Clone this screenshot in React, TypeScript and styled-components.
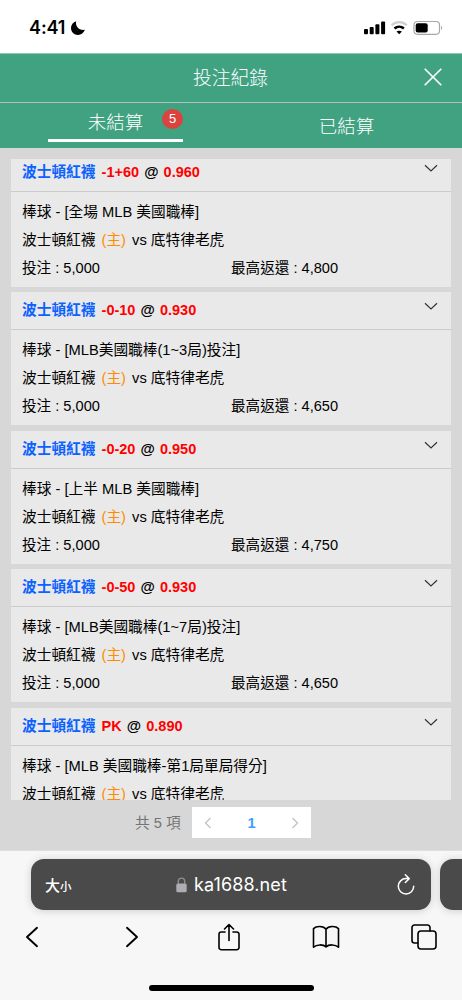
import React from "react";
import styled, { createGlobalStyle } from "styled-components";

const GlobalStyle = createGlobalStyle`
  * { box-sizing: border-box; }
  body {
    margin: 0;
    background: #f7f7f7;
    font-family: "Liberation Sans", "Noto Sans CJK TC", sans-serif;
    color: #000;
  }
`;

const Screen = styled.div`
  width: 462px;
  height: 1000px;
  overflow: hidden;
  display: flex;
  flex-direction: column;
`;

const StatusBar = styled.div`
  height: 53px;
  flex: none;
  background: #fff;
  display: flex;
  align-items: center;
  padding: 2px 19px 0 29px;
`;

const Clock = styled.span`
  font-family: Inter, sans-serif;
  font-weight: 600;
  font-size: 18px;
  letter-spacing: -0.1px;
  line-height: 20px;
  margin-right: 5px;
  width: 37px;
  white-space: nowrap;
`;

const StatusIcons = styled.div`
  margin-left: auto;
  display: flex;
  align-items: center;
`;

const TitleBar = styled.header`
  height: 50px;
  flex: none;
  background: #41a282;
  border-top: 1px solid #8fc7b3;
  border-bottom: 1px solid #b4bfb9;
  display: grid;
  grid-template-columns: 60px 1fr 60px;
  align-items: center;
  color: #fff;
`;

const Title = styled.h1`
  margin: 2px 0 0 -1px;
  grid-column: 2;
  text-align: center;
  font-size: 18.8px;
  font-weight: 300;
  line-height: 26px;
`;

const CloseButton = styled.button`
  border: 0;
  padding: 0;
  background: none;
  color: inherit;
  display: flex;
  margin: -2px 0 0 21px;
`;

const Tabs = styled.nav`
  height: 45px;
  flex: none;
  background: #41a282;
  display: grid;
  grid-template-columns: 1fr 1fr;
`;

const Tab = styled.div<{ $active?: boolean }>`
  position: relative;
  color: #fff;
  font-size: 18.5px;
  font-weight: 300;
  line-height: 26px;
  text-align: center;
  margin: 0 48px;
  height: ${(p) => (p.$active ? "39px" : "45px")};
  padding-top: ${(p) => (p.$active ? "7px" : "11px")};
  border-bottom: ${(p) => (p.$active ? "3px solid #fff" : "0")};
`;

const Badge = styled.span`
  position: absolute;
  right: 0;
  top: 6px;
  width: 21px;
  height: 20px;
  border-radius: 50%;
  background: #da433e;
  font-size: 13px;
  line-height: 20px;
`;

const Content = styled.main`
  height: 703px;
  flex: none;
  background: #d7d7d7;
  border-bottom: 1px solid #dedede;
  padding: 11px 11px 0;
`;

const BetList = styled.div`
  height: 641px;
  overflow: hidden;
`;

const BetStack = styled.div`
  margin-top: -5px;
  display: flex;
  flex-direction: column;
  gap: 5.4px;
`;

const Card = styled.article`
  flex: none;
  height: 133px;
  background: #e9e9e9;
  font-size: 14.7px;
  white-space: nowrap;
`;

const CardHead = styled.div`
  height: 38px;
  border-bottom: 1px solid #cbcbcb;
  display: flex;
  justify-content: space-between;
  padding: 6px 13px 0 11px;
  font-weight: 700;
  line-height: 25px;
`;

const Team = styled.span`
  color: #0b62ff;
  margin-right: 2px;
`;

const Odds = styled.span`
  color: #f00;
  font-size: 14.5px;
`;

const At = styled.span`
  font-size: 14.7px;
  margin: 0 1px;
`;

const CardBody = styled.div`
  padding: 6px 11px 0;
  line-height: 28px;
`;

const Row = styled.div`
  height: 28px;
  display: grid;
  grid-template-columns: 209px 1fr;
  font-size: 14.6px;
`;

const Line = styled.div`
  height: 28px;
`;

const Home = styled.span`
  color: #ff8c00;
  margin: 0 2px;
`;

const Pager = styled.div`
  display: flex;
  height: 31px;
  margin-top: 7px;
  padding-left: 124px;
  color: #747474;
  font-size: 14.7px;
`;

const Total = styled.span`
  width: 57px;
  line-height: 32px;
  white-space: nowrap;
`;

const PageBox = styled.div`
  width: 119px;
  background: #fff;
  display: flex;
  justify-content: space-between;
  align-items: center;
  padding: 0 12px;
  color: #c0c4cc;
`;

const PageNumber = styled.b`
  color: #409eff;
  line-height: 20px;
`;

const Browser = styled.footer`
  flex: 1;
  background: #f7f7f7;
  padding-top: 8px;
  display: flex;
  flex-direction: column;
`;

const AddressRow = styled.div`
  display: flex;
  gap: 9px;
  padding-left: 31px;
`;

const AddressBar = styled.div<{ $width: number }>`
  flex: none;
  width: ${(p) => p.$width}px;
  height: 51px;
  border-radius: 13px;
  background: #4a4a4a;
  color: #fff;
  box-shadow: 0 1px 9px rgba(0, 0, 0, 0.17);
  display: grid;
  grid-template-columns: 60px 1fr 60px;
  align-items: center;
`;

const TextSize = styled.span`
  padding-left: 14px;
  font-size: 15px;
  font-weight: 500;
  white-space: nowrap;
`;

const SmallGlyph = styled.span`
  font-size: 11.5px;
`;

const Url = styled.span`
  display: flex;
  align-items: center;
  justify-content: center;
  gap: 7px;
  padding-left: 1px;
  font-family: Inter, sans-serif;
  font-size: 18px;
  letter-spacing: 0.1px;
`;

const ReloadIcon = styled.svg`
  margin-left: 24px;
`;

const Toolbar = styled.div`
  display: flex;
  align-items: center;
  height: 36px;
  margin-top: 9px;
  padding-left: 24px;
`;

const Tool = styled.svg<{ $gap?: number }>`
  flex: none;
  margin-left: ${(p) => p.$gap ?? 0}px;
  fill: none;
  stroke: #000;
  stroke-linecap: round;
  stroke-linejoin: round;
`;

const HomeIndicator = styled.div`
  width: 165px;
  height: 6px;
  border-radius: 3px;
  background: #000;
  margin: 30px auto 0;
`;

type Bet = { line: string; odds: string; league: string; payout: string };

const bets: Bet[] = [
  { line: "-1+60", odds: "0.960", league: "[全場 MLB 美國職棒]", payout: "4,800" },
  { line: "-0-10", odds: "0.930", league: "[MLB美國職棒(1~3局)投注]", payout: "4,650" },
  { line: "-0-20", odds: "0.950", league: "[上半 MLB 美國職棒]", payout: "4,750" },
  { line: "-0-50", odds: "0.930", league: "[MLB美國職棒(1~7局)投注]", payout: "4,650" },
  { line: "PK", odds: "0.890", league: "[MLB 美國職棒-第1局單局得分]", payout: "4,450" },
];

const BetCard = ({ line, odds, league, payout }: Bet) => (
  <Card>
    <CardHead>
      <span>
        <Team>波士頓紅襪</Team> <Odds>{line}</Odds> <At>@</At> <Odds>{odds}</Odds>
      </span>
      <svg width="14" height="16" viewBox="0 0 14 16" fill="none" stroke="#333" strokeWidth="1.2">
        <path d="M1 5.2 7 11l6-5.8" />
      </svg>
    </CardHead>
    <CardBody>
      <Line>棒球 - {league}</Line>
      <Line>
        波士頓紅襪 <Home>(主)</Home> vs 底特律老虎
      </Line>
      <Row>
        <span>投注 : 5,000</span>
        <span>最高返還 : {payout}</span>
      </Row>
    </CardBody>
  </Card>
);

export default function App() {
  return (
    <Screen>
      <GlobalStyle />
      <StatusBar>
        <Clock>4:41</Clock>
        <svg width="14" height="14" viewBox="0 0 14 14">
          <path d="M5.200.2C3.900 5 8.200 9.900 13.900 8.800 12.800 11.900 10.200 14 7 14 3.100 14 0 10.900 0 7 0 3.800 2.100 1.100 5.200.2Z" />
        </svg>
        <StatusIcons>
          <svg width="79" height="16" viewBox="0 0 79 16">
            <rect x="0" y="9" width="4" height="5.300" rx="1" />
            <rect x="5.700" y="7" width="4" height="7.300" rx="1" />
            <rect x="11.400" y="4.200" width="4" height="10.100" rx="1" />
            <rect x="17.100" y="1.400" width="4" height="12.900" rx="1" />
            <path d="M27.600 5.300c4.300-4.200 10.900-4.200 15.200 0" fill="none" stroke="#cfcfcf" strokeWidth="2.300" />
            <path d="M30.500 8.500c2.700-2.500 6.700-2.500 9.400 0" fill="none" stroke="#000" strokeWidth="2.500" />
            <path d="M35.200 14.300l-2.700-2.700c1.500-1.300 3.900-1.300 5.400 0z" />
            <rect x="50" y="1.500" width="25.500" height="12.800" rx="3.500" fill="none" stroke="#a8a8a8" strokeWidth="1.200" />
            <rect x="51.700" y="3.200" width="12" height="9.400" rx="2" />
            <path d="M77 5.800c1.700.9 1.700 3.300 0 4.200z" fill="#a8a8a8" />
          </svg>
        </StatusIcons>
      </StatusBar>

      <TitleBar>
        <Title>投注紀錄</Title>
        <CloseButton aria-label="關閉">
          <svg width="20" height="20" viewBox="0 0 20 20" stroke="#fff" strokeWidth="1.600">
            <path d="M1.700 1.700l16.600 16.600M18.300 1.700 1.700 18.300" />
          </svg>
        </CloseButton>
      </TitleBar>
      <Tabs>
        <Tab $active>
          未結算<Badge>5</Badge>
        </Tab>
        <Tab>已結算</Tab>
      </Tabs>

      <Content>
        <BetList>
          <BetStack>
            {bets.map((bet) => (
              <BetCard key={bet.line} {...bet} />
            ))}
          </BetStack>
        </BetList>
        <Pager>
          <Total>共 5 項</Total>
          <PageBox>
            <svg width="8" height="12" viewBox="0 0 8 12" fill="none" stroke="#c0c4cc" strokeWidth="1.400">
              <path d="M6.500 1 1.500 6l5 5" />
            </svg>
            <PageNumber>1</PageNumber>
            <svg width="8" height="12" viewBox="0 0 8 12" fill="none" stroke="#c0c4cc" strokeWidth="1.400">
              <path d="M1.500 1l5 5-5 5" />
            </svg>
          </PageBox>
        </Pager>
      </Content>

      <Browser>
        <AddressRow>
          <AddressBar $width={400}>
            <TextSize>
              大<SmallGlyph>小</SmallGlyph>
            </TextSize>
            <Url>
              <svg width="11" height="16" viewBox="0 0 11 16">
                <rect x="0.300" y="6.500" width="10.400" height="8.800" rx="1.500" fill="#aeadb4" />
                <path d="M2.300 7V4.300a3.200 3.200 0 0 1 6.400 0V7" fill="none" stroke="#8f8f94" strokeWidth="1.400" />
              </svg>
              ka1688.net
            </Url>
            <ReloadIcon width="22" height="24" viewBox="0 0 22 24" fill="none" stroke="#fff" strokeWidth="1.500" strokeLinecap="round" strokeLinejoin="round">
              <path d="M14 5.600H11a7.700 7.700 0 1 0 7.700 7.700M10.300 1.800l3.900 3.800-3.900 3.900" />
            </ReloadIcon>
          </AddressBar>
          <AddressBar $width={60} />
        </AddressRow>
        <Toolbar>
          <Tool width="16" height="22" viewBox="0 0 16 22" strokeWidth="1.900">
            <path d="M13 1.800 3 11l10 9.200" />
          </Tool>
          <Tool $gap={84} width="16" height="22" viewBox="0 0 16 22" strokeWidth="1.900">
            <path d="M3 1.800 13 11 3 20.200" />
          </Tool>
          <Tool $gap={77} width="24" height="28" viewBox="0 0 24 28" strokeWidth="1.600">
            <path d="M8 9H4.200a2.200 2.200 0 0 0-2.200 2.200v13.300a2.200 2.200 0 0 0 2.200 2.200h15.600a2.200 2.200 0 0 0 2.200-2.200V11.200A2.200 2.200 0 0 0 19.800 9H16M12 17.500V1.500M7.500 6 12 1.500 16.500 6" />
          </Tool>
          <Tool $gap={71} width="28" height="24" viewBox="0 0 28 24" strokeWidth="1.600">
            <path d="M14 4.200C11.500.8 4.500.6 1.500 3.600v18.600C4.500 19.200 11.500 19.200 14 22c2.500-2.800 9.500-2.800 12.500.2V3.600C23.500.6 16.500.8 14 4.200ZM14 4.200V22" />
          </Tool>
          <Tool $gap={71} width="26" height="26" viewBox="0 0 26 26" strokeWidth="1.600">
            <rect x="7" y="7" width="18" height="18" rx="3" />
            <path d="M6.800 19H3.500A2.500 2.500 0 0 1 1 16.500v-13A2.500 2.500 0 0 1 3.500 1h13A2.500 2.500 0 0 1 19 3.500V7" />
          </Tool>
        </Toolbar>
        <HomeIndicator />
      </Browser>
    </Screen>
  );
}
